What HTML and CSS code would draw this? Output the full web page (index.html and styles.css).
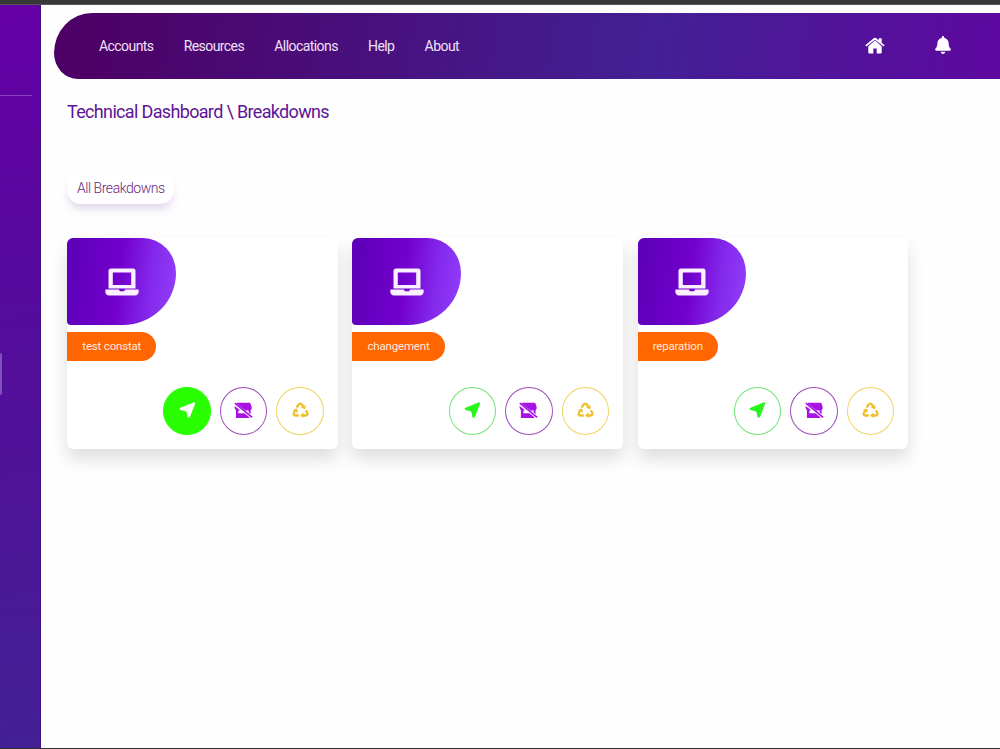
FILE: index.html
```
<!DOCTYPE html>
<html lang="en">
<head>
<meta charset="utf-8">
<title>Technical Dashboard</title>
<link rel="stylesheet" href="styles.css">
</head>
<body>
<svg class="sprite" aria-hidden="true">
  <symbol id="home" viewBox="0 0 20 17"><path d="M10 3.6 3.3 9.2V15.500Q3.300 16.500 4.300 16.500H8.300V11.500H11.700V16.500H15.700Q16.700 16.500 16.700 15.500V9.200Z"/><path d="M.3 8.300 9 1.100Q10 .4 11 1.100L13.700 3.300V1.200H16.700V5.800L19.700 8.300 18.700 9.600 10 2.700 1.300 9.600Z"/></symbol>
  <symbol id="bell" viewBox="0 0 448 512"><path d="M224 512c35.300 0 63.900-28.700 63.900-64H160.100c0 35.300 28.600 64 63.900 64zm215.400-149.700c-19.300-20.800-55.500-52-55.500-154.300 0-77.700-54.500-139.900-127.900-155.200V32a32 32 0 0 0-64 0v20.800C118.600 68.100 64.100 130.300 64.100 208c0 102.300-36.200 133.500-55.500 154.300A31.300 31.300 0 0 0 0 384c.1 16.400 13 32 32.100 32h383.800c19.100 0 32-15.600 32.100-32 .1-7.500-2.600-15.200-8.600-21.700z"/></symbol>
  <symbol id="laptop" viewBox="0 0 34 28"><path fill-rule="evenodd" d="M6 .5H28Q30.500 .5 30.500 3V20.500H3.500V3Q3.500 .5 6 .5ZM7.800 4.500V17H26.200V4.500Z"/><path d="M.8 21.600H14L14.800 23.200H19.200L20 21.600H33.200Q33.700 21.600 33.700 22V23.500Q33.500 27.200 30 27.500H4Q.5 27.200 .3 23.500V22Q.3 21.600 .8 21.600Z"/></symbol>
  <symbol id="arrow" viewBox="0 0 16 16"><path d="M15.600 1.700 10.600 14.500Q9.500 16.600 7.900 15L7.200 10.800Q6.700 9.300 5.200 9L1 8Q-.8 6.900 1 5.800L13.900 .4Q15.900 -.1 15.600 1.700Z"/></symbol>
  <symbol id="store" viewBox="0 0 19 17"><path d="M3.300 .8H15.200Q16.300 .8 16.700 2L17.700 5.200Q18 7.300 16.600 8.200V12L14.700 10.700V8.500H11.400L2.500 1.600Z"/><path d="M.6 4 6.400 8.400H4.400V11.300H10.300L15.700 15.600Q15.300 16 14.600 16H1.900V8.200Q0 6.500 .6 4Z"/><path d="M.3 1.700 1.400 .5 18.700 14.700 17.600 16Z"/></symbol>
  <symbol id="recycle" viewBox="0 0 17 16"><path class="loop" d="M4.600 5.500 6.900 2.300Q8.300 .9 9.700 2.300L11.300 4.500M13.900 8.400 15.300 10.900Q16 13.300 13.700 13.500H11M6.800 13.500H3.400Q.9 13.200 1.900 10.900L3 9"/><path d="M8.900 5.700 13.600 3 13.400 7.300ZM11.500 10.400V16L8 13.400ZM.8 7.700 5 6.500 6 11Z"/></symbol>
</svg>
<div class="topline"></div>
<div class="layout">
  <aside class="sidebar"><div class="divider"></div><div class="handle"></div></aside>
  <main class="main">
    <nav class="nav">
      <div class="links"><a>Accounts</a><a>Resources</a><a>Allocations</a><a>Help</a><a>About</a></div>
      <svg class="home"><use href="#home"/></svg>
      <svg class="bell"><use href="#bell"/></svg>
    </nav>
    <h1 class="title">Technical Dashboard \ Breakdowns</h1>
    <div class="tab">All Breakdowns</div>
    <section class="cards">
      <article class="card">
        <div class="tile"><svg><use href="#laptop"/></svg></div>
        <div class="tag">test constat</div>
        <div class="actions">
          <span class="btn send active"><svg><use href="#arrow"/></svg></span>
          <span class="btn shop"><svg><use href="#store"/></svg></span>
          <span class="btn reuse"><svg><use href="#recycle"/></svg></span>
        </div>
      </article>
      <article class="card">
        <div class="tile"><svg><use href="#laptop"/></svg></div>
        <div class="tag">changement</div>
        <div class="actions">
          <span class="btn send"><svg><use href="#arrow"/></svg></span>
          <span class="btn shop"><svg><use href="#store"/></svg></span>
          <span class="btn reuse"><svg><use href="#recycle"/></svg></span>
        </div>
      </article>
      <article class="card">
        <div class="tile"><svg><use href="#laptop"/></svg></div>
        <div class="tag">reparation</div>
        <div class="actions">
          <span class="btn send"><svg><use href="#arrow"/></svg></span>
          <span class="btn shop"><svg><use href="#store"/></svg></span>
          <span class="btn reuse"><svg><use href="#recycle"/></svg></span>
        </div>
      </article>
    </section>
  </main>
</div>
</body>
</html>
```
FILE: styles.css
```
* { box-sizing: border-box; }
body { margin: 0; height: 749px; overflow: hidden; display: flex; flex-direction: column; background: #fefefe; font-family: Roboto, sans-serif; border-bottom: 1px solid #303030; }
svg { fill: currentColor; display: block; }
.sprite { position: absolute; width: 0; height: 0; }
.loop { fill: none; stroke: currentColor; stroke-width: 2.3; }
.topline { height: 5px; flex: none; background: linear-gradient(#373737 80%, #777); }
.layout { flex: 1; display: flex; min-height: 0; }
.sidebar { width: 41px; flex: none; border-right: 1px solid #43108a; background: linear-gradient(172deg, #6500a6 0%, #5b06a0 25%, #4f1299 60%, #432094 100%); }
.divider { width: 32px; height: 1px; margin-top: 90px; background: #8b3fbd; }
.handle { width: 2px; height: 42px; margin-top: 257px; border-radius: 0 3px 3px 0; background: #8052b5; }
.main { flex: 1; min-width: 0; padding: 8px 0 0 13px; }
.nav { height: 66px; display: flex; align-items: center; padding-left: 45px; color: #f0e0f8; border-radius: 38px 0 0 24px / 40px 0 0 26px; background: linear-gradient(100deg, #4d0066 3%, #432094 63%, #5e08a0 100%); }
.links { display: flex; gap: 30.200px; width: 766px; font-size: 14px; letter-spacing: -.57px; }
.home { width: 20px; height: 17px; color: #fff; margin-top: -2px; }
.bell { width: 16px; height: 18px; color: #fff; margin: -2px 0 0 50px; }
.title { margin: 22px 0 0 13px; font-size: 18px; line-height: 22px; font-weight: 400; letter-spacing: -.66px; color: #5d1496; }
.tab { width: 107px; height: 33px; margin: 48px 0 0 13px; padding: 1px 0 0 10px; line-height: 33px; font-size: 14px; font-weight: 300; letter-spacing: -.46px; color: #6c257c; background: #fff; border-radius: 14px; box-shadow: 0 7px 9px -2px rgba(90, 40, 150, .18); }
.cards { display: grid; grid-template-columns: repeat(3, 270.700px); gap: 14.500px; margin: 34px 0 0 13.300px; }
.card { height: 211px; display: flex; flex-direction: column; align-items: flex-start; background: #fff; border-radius: 6px; box-shadow: 0 10px 17px rgba(0, 0, 0, .13); }
.tile { width: 108.500px; height: 87px; display: grid; place-items: center; color: #faf0ff; border-radius: 6px 33px 53px 4px / 6px 35px 52px 4px; background: linear-gradient(97deg, #5d00b8 5%, #7300cd 48%, #8429ec 75%, #9240fa 100%); }
.tile svg { width: 34px; height: 28px; }
.tag { height: 29px; margin-top: 7px; padding: 0 15px; line-height: 29px; font-size: 11.500px; letter-spacing: -.18px; color: #ffeadc; background: #ff6500; border-radius: 0 15px 15px 0; }
.actions { display: flex; gap: 9px; align-self: flex-end; margin: 26px 14px 0 0; }
.btn { width: 47.500px; height: 48px; display: grid; place-items: center; border: 1px solid; border-radius: 50%; }
.btn svg { width: 17px; height: 16px; margin-top: -2px; }
.send { color: #28f51c; border-color: #70e575; }
.send.active { color: #fff; background: #29ff00; border-color: #29ff00; }
.shop { color: #a813e4; border-color: #a04cba; }
.btn.shop svg { width: 19px; height: 17px; margin-top: -1px; }
.reuse { color: #efbf2b; border-color: #efd35f; }
```
